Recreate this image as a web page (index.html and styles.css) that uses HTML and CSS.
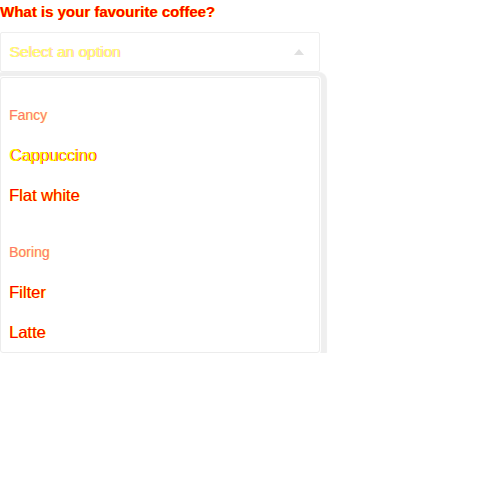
FILE: index.html
```html
<!DOCTYPE html>
<html>
<head>
<meta charset="utf-8">
<link rel="stylesheet" href="styles.css">
</head>
<body>
<div class="field">
  <label class="question">What is your favourite coffee?</label>
  <div class="select">
    <span class="placeholder">Select an option</span>
    <svg class="arrow" width="10" height="6" viewBox="0 0 10 6"><path d="M0 6 L5 0 L10 6 Z" fill="#e0e0e0"/></svg>
  </div>
  <div class="listbox">
    <div class="group">
      <div class="group-label">Fancy</div>
      <div class="option opt-a">Cappuccino</div>
      <div class="option opt-b">Flat white</div>
    </div>
    <div class="group">
      <div class="group-label">Boring</div>
      <div class="option opt-b">Filter</div>
      <div class="option opt-b">Latte</div>
    </div>
  </div>
</div>
</body>
</html>
```
FILE: styles.css
```css
html, body {
  margin: 0;
  padding: 0;
  background: #fff;
  font-family: "Liberation Sans", Arial, sans-serif;
}
.field {
  width: 320px;
  display: flex;
  flex-direction: column;
}
.question {
  font-size: 15px;
  font-weight: bold;
  line-height: 16px;
  padding-top: 4px;
  color: #ff0000;
  text-shadow: 1px 0 0 #ffff00;
  height: 28px;
}
.select {
  height: 38px;
  border: 1px solid #eeeeee;
  border-radius: 2px;
  box-sizing: content-box;
  display: flex;
  align-items: center;
  justify-content: space-between;
  padding: 0 15px 0 8px;
}
.placeholder {
  font-size: 15.5px;
  color: #ffff00;
  text-shadow: 1px 0 0 rgba(255,0,0,0.5);
  opacity: 0.6;
}
.arrow {
  display: block;
}
.listbox {
  margin-top: 5px;
  border: 1px solid #ececec;
  background: #fff;
  box-shadow: 0 0 0 1px #fff, 1px 1px 1px 6px #efefef;
  border-radius: 3px;
}
.group {
  padding-top: 17px;
}
.group-label {
  height: 40px;
  display: flex;
  align-items: center;
  padding-left: 8px;
  font-size: 14px;
  color: #ff0000;
  opacity: 0.55;
  text-shadow: 1px 0 0 #ffff00;
}
.option {
  height: 40px;
  display: flex;
  align-items: center;
  padding-left: 8px;
  font-size: 16.5px;
}
.opt-a {
  color: #ffff00;
  text-shadow: 1px 0 0 #ff0000;
}
.opt-b {
  color: #ff0000;
  text-shadow: 1px 0 0 #ffff00;
}
```
